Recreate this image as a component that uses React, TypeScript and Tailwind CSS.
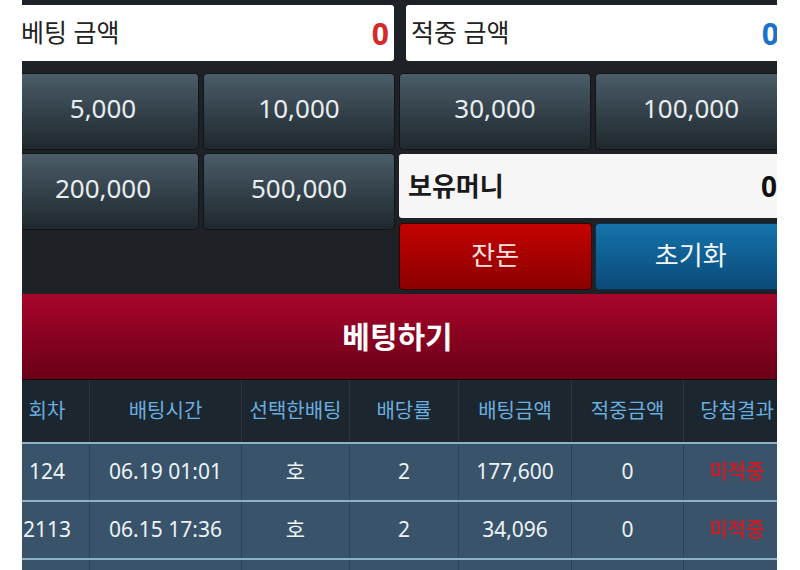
import React from "react";

const font = { fontFamily: '"Noto Sans", "Noto Sans CJK KR", sans-serif' };

function ChipButton({ label }: { label: string }) {
  return (
    <div className="flex h-[77px] items-center justify-center rounded-[4px] border border-[#111518] bg-gradient-to-b from-[#4b5d69] to-[#1f282e] pb-[6px] text-[26px] text-[#e8edf0]">
      {label}
    </div>
  );
}

const rows = [
  { no: "124", time: "06.19 01:01", pick: "호", odds: "2", amount: "177,600", win: "0", result: "미적중" },
  { no: "2113", time: "06.15 17:36", pick: "호", odds: "2", amount: "34,096", win: "0", result: "미적중" },
  { no: "", time: "", pick: "", odds: "", amount: "", win: "", result: "" },
];

const cols = "grid grid-cols-[85px_152px_108px_109px_113px_112px_106px]";

export default function App() {
  return (
    <div className="h-[570px] w-[800px] bg-white" style={font}>
      <div className="ml-[22px] h-[570px] w-[755px] overflow-hidden bg-[#1e2226]">
        <div className="-ml-[17px] w-[785px]">
          {/* top amounts */}
          <div className="flex gap-[12px] pl-[11px] pr-[6px] pt-[5px]">
            <div className="flex h-[56px] flex-1 items-center justify-between rounded-[3px] bg-white px-[5px]">
              <span className="text-[25px] text-[#222]">베팅 금액</span>
              <span className="text-[30px] font-bold text-[#d42a2a]">0</span>
            </div>
            <div className="flex h-[56px] flex-1 items-center justify-between rounded-[3px] bg-white px-[5px]">
              <span className="text-[25px] text-[#222]">적중 금액</span>
              <span className="text-[30px] font-bold text-[#1a73c8]">0</span>
            </div>
          </div>

          {/* chip buttons */}
          <div className="grid grid-cols-4 gap-x-[4px] pl-[2px] pr-[3px] pt-[12px]">
            <ChipButton label="5,000" />
            <ChipButton label="10,000" />
            <ChipButton label="30,000" />
            <ChipButton label="100,000" />
          </div>
          <div className="grid h-[140px] grid-cols-2 gap-x-[4px] pl-[2px] pr-[3px] pt-[3px]">
            <div className="grid grid-cols-2 content-start gap-x-[4px]">
              <ChipButton label="200,000" />
              <ChipButton label="500,000" />
            </div>
            <div className="flex flex-col">
              <div className="mt-[1px] flex h-[64px] items-center justify-between rounded-[3px] bg-[#f6f6f6] pl-[9px] pr-[10px]">
                <span className="text-[26px] font-bold text-[#1a1a1a]">보유머니</span>
                <span className="text-[28px] font-bold text-[#111]">0</span>
              </div>
              <div className="mt-[5px] grid grid-cols-2 gap-x-[3px]">
                <div className="flex h-[67px] items-center justify-center rounded-[4px] border border-[#3a0000] bg-gradient-to-b from-[#c40202] to-[#8b0000] pb-[2px] text-[26px] text-[#ffe2e2]">
                  잔돈
                </div>
                <div className="flex h-[67px] items-center justify-center rounded-[4px] border border-[#06314f] bg-gradient-to-b from-[#1673ab] to-[#0a4a78] pb-[2px] text-[26px] text-[#f2f7fb]">
                  초기화
                </div>
              </div>
            </div>
          </div>

          {/* bet banner */}
          <div className="mt-[4px] flex h-[86px] items-center justify-center border-b border-[#1a0a0d] bg-gradient-to-b from-[#a8062b] to-[#6a0017]">
            <span className="text-[30px] font-bold text-white">베팅하기</span>
          </div>

          {/* table */}
          <div className={`${cols} h-[62px] bg-[#1c262e] text-[20px] text-[#6aaee0]`}>
            {["회차", "배팅시간", "선택한배팅", "배당률", "배팅금액", "적중금액", "당첨결과"].map((h, i) => (
              <div
                key={h}
                className={`flex items-center justify-center ${i < 6 ? "border-r border-[#29343d]" : ""}`}
              >
                {h}
              </div>
            ))}
          </div>
          {rows.map((r, ri) => (
            <div
              key={ri}
              className={`${cols} h-[58px] border-t-2 border-[#8fb1c8] bg-[#38536a] text-[21px] text-[#eef3f6]`}
            >
              {[r.no, r.time, r.pick, r.odds, r.amount, r.win].map((v, i) => (
                <div key={i} className="flex items-center justify-center border-r border-[#2c4457]">
                  {v}
                </div>
              ))}
              <div className="flex items-center justify-center text-[20px] font-bold text-[#c2212b] blur-[0.6px]">
                {r.result}
              </div>
            </div>
          ))}
        </div>
      </div>
    </div>
  );
}
